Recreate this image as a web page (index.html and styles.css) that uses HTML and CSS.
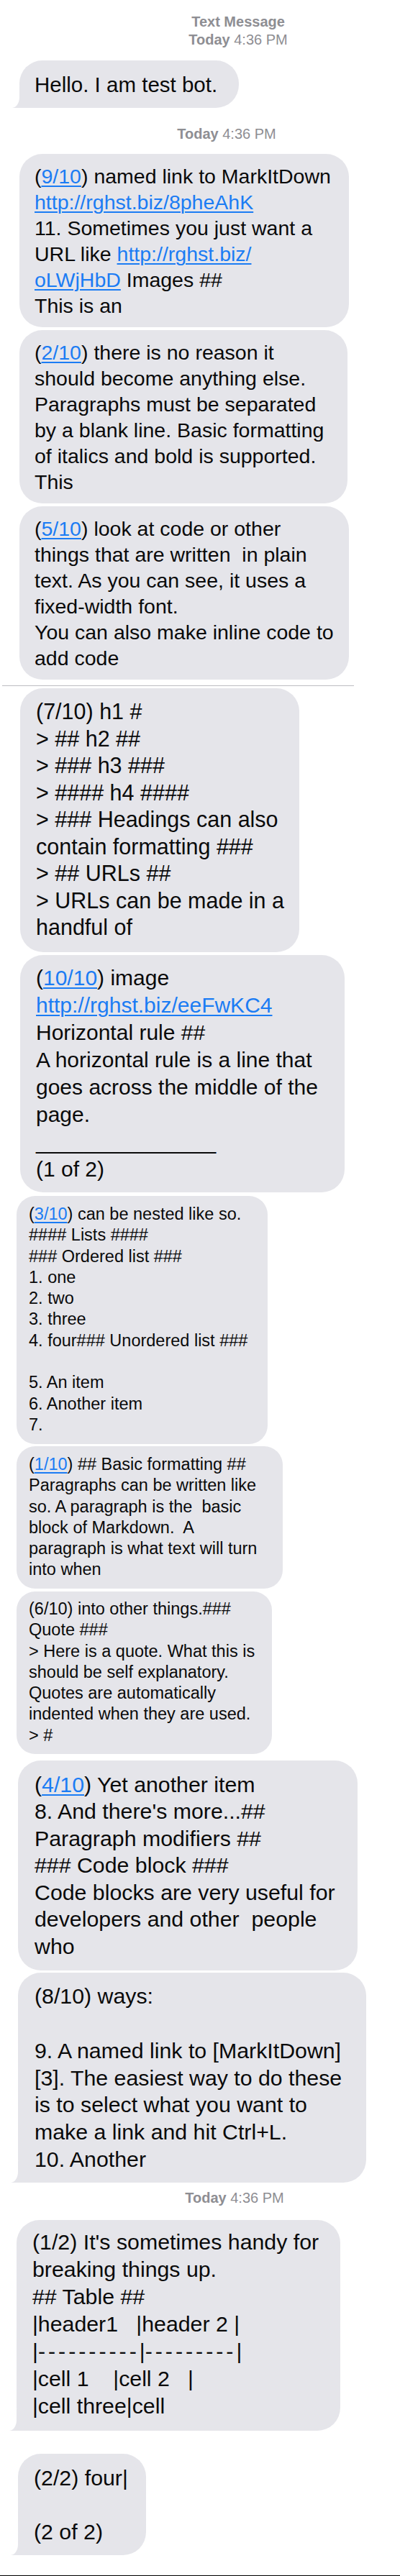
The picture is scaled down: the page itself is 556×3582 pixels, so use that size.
FILE: index.html
```html
<!DOCTYPE html>
<html lang="en">
<head>
<meta charset="utf-8">
<title>Text Message</title>
<link rel="stylesheet" href="styles.css">
</head>
<body>
<main class="thread">
  <header class="stamp stamp-first">
    <div class="stamp-title">Text Message</div>
    <div><b>Today</b> 4:36 PM</div>
  </header>

  <div class="bubble big b-hello tail"><p class="txt">Hello. I am test bot.</p></div>

  <div class="stamp stamp-second"><b>Today</b> 4:36 PM</div>

  <div class="bubble big b-m9"><p class="txt">(<a class="lnk" href="#">9/10</a>) named link to MarkItDown<br><a class="lnk" href="#">http://rghst.biz/8pheAhK</a><br>11. Sometimes you just want a<br>URL like <a class="lnk" href="#">http://rghst.biz/</a><br><a class="lnk" href="#">oLWjHbD</a> Images ##<br>This is an</p></div>

  <div class="bubble big b-m2"><p class="txt">(<a class="lnk" href="#">2/10</a>) there is no reason it<br>should become anything else.<br>Paragraphs must be separated<br>by a blank line. Basic formatting<br>of italics and bold is supported.<br>This</p></div>

  <div class="bubble big b-m5"><p class="txt">(<a class="lnk" href="#">5/10</a>) look at code or other<br>things that are written  in plain<br>text. As you can see, it uses a<br>fixed-width font.<br>You can also make inline code to<br>add code</p></div>

  <div class="sep"></div>

  <div class="bubble big b-m7"><p class="txt">(7/10) h1 #<br>&gt; ## h2 ##<br>&gt; ### h3 ###<br>&gt; #### h4 ####<br>&gt; ### Headings can also<br>contain formatting ###<br>&gt; ## URLs ##<br>&gt; URLs can be made in a<br>handful of</p></div>

  <div class="bubble big b-m10"><p class="txt">(<a class="lnk" href="#">10/10</a>) image<br><a class="lnk" href="#">http://rghst.biz/eeFwKC4</a><br>Horizontal rule ##<br>A horizontal rule is a line that<br>goes across the middle of the<br>page.<br>_______________<br>(1 of 2)</p></div>

  <div class="bubble small b-m3"><p class="txt">(<a class="lnk" href="#">3/10</a>) can be nested like so.<br>#### Lists ####<br>### Ordered list ###<br>1. one<br>2. two<br>3. three<br>4. four### Unordered list ###<br><br>5. An item<br>6. Another item<br>7.</p></div>

  <div class="bubble small b-m1"><p class="txt">(<a class="lnk" href="#">1/10</a>) ## Basic formatting ##<br>Paragraphs can be written like<br>so. A paragraph is the  basic<br>block of Markdown.  A<br>paragraph is what text will turn<br>into when</p></div>

  <div class="bubble small b-m6"><p class="txt">(6/10) into other things.###<br>Quote ###<br>&gt; Here is a quote. What this is<br>should be self explanatory.<br>Quotes are automatically<br>indented when they are used.<br>&gt; #</p></div>

  <div class="bubble big b-m4"><p class="txt">(<a class="lnk" href="#">4/10</a>) Yet another item<br>8. And there's more...##<br>Paragraph modifiers ##<br>### Code block ###<br>Code blocks are very useful for<br>developers and other  people<br>who</p></div>

  <div class="bubble big b-m8 tail"><p class="txt">(8/10) ways:<br><br>9. A named link to [MarkItDown]<br>[3]. The easiest way to do these<br>is to select what you want to<br>make a link and hit Ctrl+L.<br>10. Another</p></div>

  <div class="stamp stamp-third"><b>Today</b> 4:36 PM</div>

  <div class="bubble big b-h1 tail"><p class="txt">(1/2) It's sometimes handy for<br>breaking things up.<br>## Table ##<br>|header1   |header 2 |<br>|<span class="dash">----------</span>|<span class="dash">---------</span>|<br>|cell 1    |cell 2   |<br>|cell three|cell</p></div>

  <div class="bubble big b-h2 tail"><p class="txt">(2/2) four|<br><br>(2 of 2)</p></div>

  <div class="end-line"></div>
</main>
</body>
</html>
```

FILE: styles.css
```css
* {
  box-sizing: border-box;
}

html,
body {
  margin: 0;
  padding: 0;
  background: #ffffff;
}

body {
  font-family: "Liberation Sans", Arial, Helvetica, sans-serif;
  color: #0a0a0a;
}

.thread {
  width: 556px;
  display: flex;
  flex-direction: column;
  align-items: flex-start;
}

/* ---------- timestamps ---------- */
.stamp {
  align-self: stretch;
  text-align: center;
  font-size: 20px;
  line-height: 25px;
  color: #8e8e93;
}

.stamp b,
.stamp-title {
  font-weight: 700;
}

.stamp-first {
  padding-top: 18px;
  padding-left: 106px;
}

.stamp-second {
  margin-top: 24px;
  padding-left: 74px;
}

.stamp-third {
  margin-top: 8.6px;
  padding-left: 96px;
}

/* ---------- bubbles ---------- */
.bubble {
  position: relative;
  z-index: 0;
  background: #e5e5ea;
}

.bubble.big {
  border-radius: 32px;
}

.bubble.small {
  border-radius: 26px;
}

.txt {
  margin: 0;
  white-space: pre;
}

.lnk {
  color: #1b7cf4;
  text-decoration: underline;
  text-decoration-thickness: 1.5px;
  text-underline-offset: 3px;
}

.dash {
  letter-spacing: 4px;
}

/* tail at the bottom-left of a received bubble */
.tail::before {
  content: "";
  position: absolute;
  z-index: -1;
  left: -10px;
  bottom: 0;
  width: 44px;
  height: 30px;
  background: #e5e5ea;
}

.tail::after {
  content: "";
  position: absolute;
  z-index: -1;
  left: -40px;
  bottom: 0;
  width: 40px;
  height: 31px;
  background: #ffffff;
  border-bottom-right-radius: 10px 15px;
}

/* individual bubbles */
.b-hello {
  margin-top: 16px;
  margin-left: 27px;
  width: 305px;
  font-size: 29.5px;
  line-height: 36px;
  padding: 16px 0 14px 21px;
}

.b-m9,
.b-m2,
.b-m5 {
  font-size: 28.5px;
  line-height: 36px;
  padding: 13px 0 12px 21px;
  margin-left: 27px;
}

.b-m9 {
  margin-top: 15px;
  width: 458px;
}

.b-m2 {
  margin-top: 4px;
  width: 456px;
}

.b-m5 {
  margin-top: 4px;
  width: 458px;
}

.sep {
  margin-top: 8px;
  margin-left: 3px;
  width: 489px;
  height: 1px;
  background: #bdbdc1;
}

.b-m7 {
  margin-top: 3px;
  margin-left: 28px;
  width: 388px;
  font-size: 30.5px;
  line-height: 37.5px;
  padding: 14px 0 15.5px 22px;
}

.b-m10 {
  margin-top: 4px;
  margin-left: 28px;
  width: 451px;
  font-size: 30px;
  line-height: 38px;
  padding: 13px 0 13px 22px;
}

.b-m3,
.b-m1,
.b-m6 {
  margin-left: 23px;
  font-size: 23.5px;
  line-height: 29.3px;
}

.b-m3 {
  margin-top: 5px;
  width: 349px;
  padding: 11px 0 11.7px 17px;
}

.b-m1 {
  margin-top: 3px;
  width: 370px;
  padding: 11px 0 11.2px 17px;
}

.b-m6 {
  margin-top: 4px;
  width: 355px;
  padding: 10px 0 10.9px 17px;
}

.b-m4 {
  margin-top: 9px;
  margin-left: 25px;
  width: 472px;
  font-size: 30.3px;
  line-height: 37.5px;
  padding: 15px 0 14.5px 23px;
}

.b-m8 {
  margin-top: 3px;
  margin-left: 25px;
  width: 484px;
  font-size: 30.3px;
  line-height: 37.7px;
  padding: 14.5px 0 13.6px 23px;
}

.b-h1 {
  margin-top: 18.4px;
  margin-left: 23px;
  width: 450px;
  font-size: 30.3px;
  line-height: 38px;
  padding: 12px 0 15px 22px;
}

.b-h2 {
  margin-top: 32px;
  margin-left: 25px;
  width: 178px;
  font-size: 30.3px;
  line-height: 37.5px;
  padding: 15.5px 0 13px 22px;
}

.end-line {
  align-self: stretch;
  margin-top: 28px;
  height: 1px;
  background: #000000;
}
```
